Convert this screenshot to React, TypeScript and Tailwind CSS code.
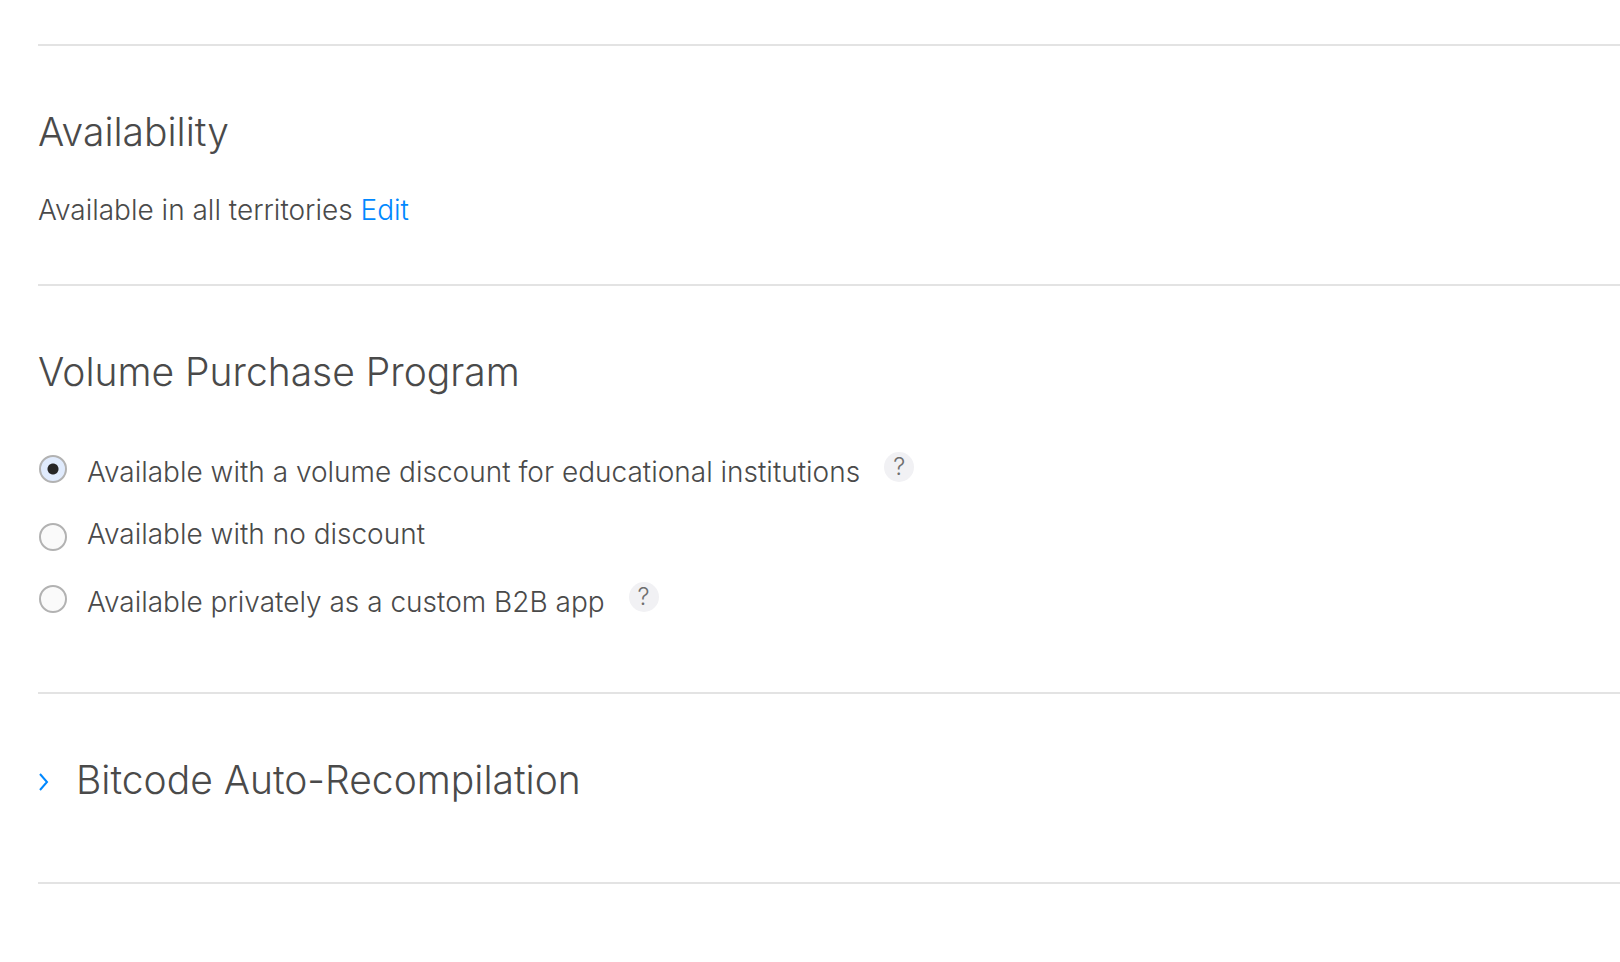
import { useState } from 'react'

type Discount = 'edu' | 'none' | 'b2b'

const OPTIONS: { value: Discount; label: string; help?: string }[] = [
  { value: 'edu', label: 'Available with a volume discount for educational institutions', help: 'About volume discounts' },
  { value: 'none', label: 'Available with no discount' },
  { value: 'b2b', label: 'Available privately as a custom B2B app', help: 'About custom B2B apps' },
]

function HelpButton({ label }: { label: string }) {
  return (
    <button
      type="button"
      aria-label={label}
      className="mt-px ml-6 flex size-[30px] shrink-0 items-center justify-center rounded-full bg-[#f1f1f4] text-2xl leading-none text-[#6e6e6e]"
    >
      ?
    </button>
  )
}

export default function App() {
  const [discount, setDiscount] = useState<Discount>('edu')
  const [expanded, setExpanded] = useState(false)

  return (
    <main className="min-h-screen overflow-x-hidden bg-white pt-11 pl-[38px] font-['Inter','Liberation_Sans',sans-serif] font-light text-[#4a4a4a]">
      <section className="border-t-2 border-[#e3e3e3] pt-[60px] pb-[53px]">
        <h2 className="text-[39px] leading-[52px]">Availability</h2>
        <p className="mt-[31px] text-[28px] leading-[42px]">
          Available in all territories{' '}
          <a href="#edit" className="text-[#0088ff] hover:underline">
            Edit
          </a>
        </p>
      </section>

      <section className="border-t-2 border-[#e3e3e3] pt-[60px] pb-[46px]">
        <h2 className="text-[39px] leading-[52px]">Volume Purchase Program</h2>
        <div role="radiogroup" aria-label="Volume Purchase Program" className="mt-[53px]">
          {OPTIONS.map((option) => (
            <div key={option.value} className="flex h-[65px] items-start">
              <input
                id={option.value}
                type="radio"
                name="discount"
                checked={discount === option.value}
                onChange={() => setDiscount(option.value)}
                className={`mr-5 ml-px size-7 shrink-0 appearance-none rounded-full border-2 border-[#b2b2b2] bg-[#fafafa] checked:bg-[#e0ebfd] checked:bg-[radial-gradient(circle,#262626_5px,#e0ebfd_6px)] ${
                  option.help ? 'mt-1' : 'mt-[7px]'
                }`}
              />
              <label htmlFor={option.value} className={`text-[28px] leading-[34px] ${option.help ? 'mt-1' : 'mt-px'}`}>
                {option.label}
              </label>
              {option.help && <HelpButton label={option.help} />}
            </div>
          ))}
        </div>
      </section>

      <section className="border-y-2 border-[#e3e3e3] pt-[60px] pb-[76px]">
        <h2 className="text-[39px] leading-[52px]">
          <button
            type="button"
            aria-expanded={expanded}
            onClick={() => setExpanded(!expanded)}
            className="flex items-center gap-[26px]"
          >
            <svg viewBox="0 0 12 24" className="h-6 w-3" fill="none" stroke="#0088ff" strokeWidth="2">
              <path d="M2 6l7 8-7 8" />
            </svg>
            Bitcode Auto-Recompilation
          </button>
        </h2>
      </section>
    </main>
  )
}
